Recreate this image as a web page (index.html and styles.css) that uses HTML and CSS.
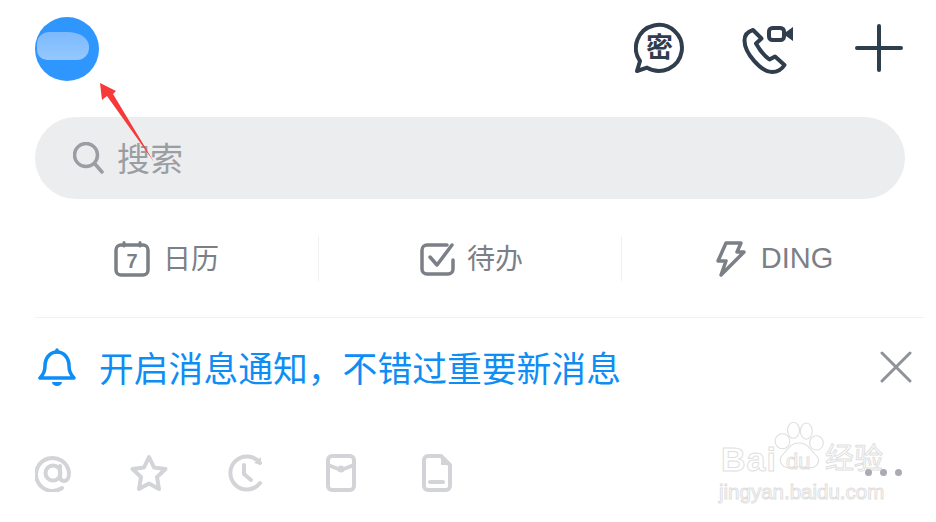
FILE: index.html
```html
<!DOCTYPE html>
<html lang="zh-CN">
<head>
    <meta charset="UTF-8">
    <meta name="viewport" content="width=device-width, initial-scale=1.0">
    <title>消息</title>
    <link rel="stylesheet" href="styles.css">
</head>
<body>
    <div class="page">
        <!-- Top bar -->
        <div class="topbar">
            <div class="avatar"><div class="avatar-blur"></div></div>
            <div class="top-icons">
                <svg class="icon-secret" width="52" height="52" viewBox="0 0 52 52">
                    <path d="M13 45.600A23 23 0 1 0 6 39L3 49Z"/>
                    <text x="25.500" y="35" class="secret-char">密</text>
                </svg>
                <svg class="icon-call" width="54" height="50" viewBox="0 0 54 50">
                    <path d="M11 4C6 5.500 2.500 9 2.500 14.500 2.500 27 19 46 30 46 35 46 40 43 42.500 39L33 30.500 27.500 33.500C22 29.500 17 23 14 17.500L19.500 12.500Z"/>
                    <rect x="27" y="2" width="15" height="12" rx="3.500"/>
                    <polygon class="cam-lens" points="44,6 51,1 51,15 44,10"/>
                </svg>
                <svg class="icon-plus" width="48" height="48" viewBox="0 0 48 48">
                    <path d="M24 2V46M2 24H46"/>
                </svg>
            </div>
        </div>

        <!-- Search -->
        <div class="search-bar">
            <svg width="32" height="32" viewBox="0 0 32 32">
                <circle cx="13" cy="13" r="11.500"/>
                <path d="M22 22L29 30"/>
            </svg>
            <span>搜索</span>
        </div>

        <!-- Shortcuts -->
        <div class="shortcuts">
            <div class="shortcut shortcut-first">
                <svg width="36" height="36" viewBox="0 0 36 36">
                    <rect x="2" y="4" width="32" height="30" rx="5"/>
                    <path class="cal-pin" d="M10 1.500V5M26 1.500V5"/>
                    <text x="18" y="27" class="cal-day">7</text>
                </svg>
                <span>日历</span>
            </div>
            <div class="shortcut shortcut-todo">
                <svg width="36" height="34" viewBox="0 0 36 34">
                    <path d="M27 3H7A5 5 0 0 0 2 8V27A5 5 0 0 0 7 32H28A5 5 0 0 0 33 27V18"/>
                    <path d="M10 15L17 23L32 3"/>
                </svg>
                <span>待办</span>
            </div>
            <div class="shortcut">
                <svg width="30" height="36" viewBox="0 0 30 36">
                    <path d="M10 2H25L21 11H28L5 34L10 20H2Z"/>
                </svg>
                <span class="ding">DING</span>
            </div>
        </div>

        <!-- Notification notice -->
        <div class="notice">
            <svg class="bell" width="38" height="40" viewBox="0 0 38 40">
                <path d="M2 31H36C32 27 31 24 31 19 31 11 26 5 19 5 12 5 7 11 7 19 7 24 6 27 2 31Z"/>
                <path d="M19 5V3"/>
                <path class="bell-clapper" d="M14 35H24A5 4 0 0 1 14 35Z"/>
            </svg>
            <span class="notice-text">开启消息通知，不错过重要新消息</span>
            <svg class="notice-close" width="32" height="32" viewBox="0 0 32 32">
                <path d="M2 2L30 30M30 2L2 30"/>
            </svg>
        </div>

        <!-- Filter icons -->
        <div class="filters">
            <div class="filter">
                <svg width="36" height="38" viewBox="0 0 36 38">
                    <path d="M27 34A16.500 16.500 0 1 1 34 19C34 24 32 27 29 27 26 27 25 25 25 22V12"/>
                    <circle cx="18" cy="19" r="7.500"/>
                </svg>
            </div>
            <div class="filter">
                <svg width="38" height="38" viewBox="0 0 38 38">
                    <path d="M19 3L24 13.500 35.500 15 27 23 29 35 19 29.500 9 35 11 23 2.500 15 14 13.500Z"/>
                </svg>
            </div>
            <div class="filter">
                <svg width="36" height="38" viewBox="0 0 36 38">
                    <path d="M33 29A16.500 16.500 0 1 1 33 9"/>
                    <path class="fill-tip" d="M27 9L34 11 34 3Z"/>
                    <path d="M17 11V20L24 26"/>
                </svg>
            </div>
            <div class="filter">
                <svg width="30" height="38" viewBox="0 0 30 38">
                    <rect x="2" y="2" width="26" height="34" rx="4"/>
                    <path d="M2 11L15 16 28 11"/>
                    <circle class="fill-tip" cx="15" cy="15" r="3.500"/>
                </svg>
            </div>
            <div class="filter">
                <svg width="30" height="38" viewBox="0 0 30 38">
                    <path d="M6 2H19L28 11V32A4 4 0 0 1 24 36H6A4 4 0 0 1 2 32V6A4 4 0 0 1 6 2Z"/>
                    <path class="fill-tip" d="M19 2L28 11H19Z"/>
                    <path d="M8 28H21"/>
                </svg>
            </div>
        </div>

        <!-- Arrow drawn on top of the screenshot -->
        <svg class="red-arrow" width="70" height="90" viewBox="0 0 70 90">
            <polygon points="5,3 21,11 18,14 59,82 12,16 7,20"/>
        </svg>

        <!-- Watermark -->
        <div class="watermark">
            <svg class="paw" width="66" height="54" viewBox="0 0 72 64" preserveAspectRatio="none">
                <ellipse cx="18" cy="24" rx="8" ry="9"/>
                <ellipse cx="30" cy="11" rx="6.500" ry="9.500"/>
                <ellipse cx="44" cy="12" rx="6.500" ry="9.500"/>
                <ellipse cx="55" cy="26" rx="7.500" ry="8.500"/>
                <path d="M36 26C26 26 24 34 18 40 12 47 18 57 28 55 33 54 40 54 45 55 56 57 61 47 54 40 48 34 46 26 36 26Z"/>
            </svg>
            <span class="wm-bai">Bai</span>
            <span class="wm-du">du</span>
            <span class="wm-jy">经验</span>
            <span class="wm-url">jingyan.baidu.com</span>
        </div>

        <!-- Dots at the right of the filter row -->
        <div class="dots"><i></i><i></i><i></i></div>
    </div>
</body>
</html>
```

FILE: styles.css
```css
/* General Page Styling */
body {
    margin: 0;
    background: #fff;
    font-family: "Liberation Sans", "Noto Sans CJK SC", sans-serif;
}

svg {
    display: block;
    flex: none;
    fill: none;
    stroke-linecap: round;
    stroke-linejoin: round;
}

.page {
    position: relative;
    box-sizing: border-box;
    width: 936px;
    height: 522px;
    overflow: hidden;
    padding: 17px 12px 0 35px;
}

/* Top bar */
.topbar {
    display: flex;
    justify-content: space-between;
    height: 64px;
}

.avatar {
    box-sizing: border-box;
    width: 64px;
    height: 64px;
    padding: 15px 0 0 2px;
    border-radius: 50%;
    background: #2f96fd;
}

.avatar-blur {
    width: 52px;
    height: 28px;
    border-radius: 12px 22px 12px 10px / 12px 14px 12px 10px;
    background: linear-gradient(#7db9fc, #94c8ff);
    filter: blur(0.6px);
}

.top-icons {
    display: flex;
    align-items: center;
    margin-right: 21px;
}

.top-icons svg {
    stroke: #2f3d4c;
    stroke-width: 4;
}

.icon-secret {
    margin-right: 56px;
    margin-top: -2px;
}

.icon-call {
    margin-right: 59px;
    margin-top: 3px;
}

.icon-plus {
    margin-top: -2px;
}

.top-icons .secret-char {
    font-family: "Noto Sans CJK SC", sans-serif;
    font-size: 27px;
    font-weight: 700;
    text-anchor: middle;
    fill: #2f3d4c;
    stroke: none;
}

.top-icons .cam-lens {
    fill: #2f3d4c;
    stroke: none;
}

/* Search Bar */
.search-bar {
    display: flex;
    align-items: center;
    gap: 12px;
    height: 82px;
    margin: 36px 19px 0 0;
    padding-left: 38px;
    border-radius: 41px;
    background: #ecedef;
    color: #9a9ea2;
    font-size: 33px;
}

.search-bar span {
    padding-bottom: 2px;
}

.search-bar svg {
    stroke: #9a9ea2;
    stroke-width: 3.5;
}

/* Shortcuts */
.shortcuts {
    display: grid;
    grid-template-columns: 283px 303px 303px;
    height: 45px;
    margin-top: 37px;
    padding-bottom: 36px;
    border-bottom: 1px solid #f0f1f2;
}

.shortcut {
    display: flex;
    align-items: center;
    justify-content: center;
    gap: 13px;
    padding-left: 3px;
    border-left: 1px solid #eff0f1;
    color: #7b8087;
    font-size: 28px;
}

.shortcut span {
    padding-bottom: 4px;
}

.shortcut-first {
    border-left: none;
    padding: 0 20px 0 0;
}

.shortcut-todo {
    gap: 11px;
}

.shortcut svg {
    stroke: #7b8087;
    stroke-width: 3.5;
}

.shortcut .cal-pin {
    stroke-width: 3;
}

.shortcut .cal-day {
    font-size: 20px;
    font-weight: 700;
    text-anchor: middle;
    fill: #7b8087;
    stroke: none;
}

.shortcut .ding {
    font-size: 29px;
    margin-left: 2px;
    padding-bottom: 0;
}

/* Notice */
.notice {
    display: flex;
    align-items: center;
    height: 40px;
    margin-top: 29px;
    padding-left: 3px;
    color: #0e8df5;
    font-size: 34.800px;
}

.bell {
    stroke: #0e8df5;
    stroke-width: 3.500;
    margin-right: 23px;
}

.bell .bell-clapper {
    fill: #0e8df5;
    stroke: none;
}

.notice-text {
    flex: 1;
    white-space: nowrap;
}

.notice-close {
    stroke: #8f9399;
    stroke-width: 3;
    margin-right: 12px;
}

/* Filter icons */
.filters {
    display: flex;
    margin: 67px 0 0 -30px;
}

.filter {
    display: flex;
    justify-content: center;
    width: 96px;
}

.filters svg {
    stroke: #d3d4d8;
    stroke-width: 4;
}

.filters .fill-tip {
    fill: #d3d4d8;
    stroke: none;
}

.dots {
    position: absolute;
    left: 865px;
    top: 469px;
    display: flex;
    gap: 8px;
}

.dots i {
    width: 7px;
    height: 7px;
    border-radius: 50%;
    background: #a9adb2;
}

/* Overlays */
.red-arrow {
    position: absolute;
    left: 95px;
    top: 80px;
    fill: #f63a3a;
}

.watermark {
    position: absolute;
    left: 718px;
    top: 418px;
    width: 180px;
    height: 90px;
    color: transparent;
    -webkit-text-stroke: 1px #dfdfdf;
}

.watermark span {
    position: absolute;
    white-space: nowrap;
}

.paw {
    position: absolute;
    left: 48px;
    top: 3px;
    stroke: #dfdfdf;
    stroke-width: 1.200;
}

.wm-bai {
    left: 3px;
    top: 22px;
    font-size: 34px;
    font-weight: 700;
    letter-spacing: 1px;
}

.wm-du {
    left: 68px;
    top: 31px;
    font-size: 22px;
}

.wm-jy {
    left: 107px;
    top: 17px;
    font-size: 29px;
    font-family: "Noto Sans CJK SC", sans-serif;
}

.wm-url {
    left: 1px;
    top: 62px;
    font-size: 20.500px;
}
```
